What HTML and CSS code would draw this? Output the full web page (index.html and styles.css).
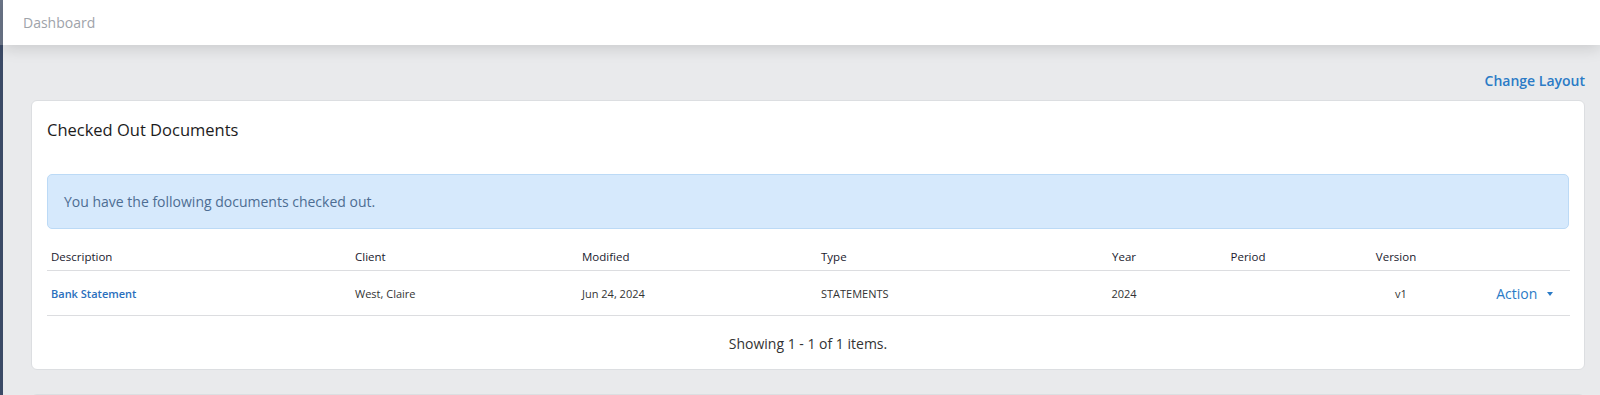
FILE: index.html
```html
<!DOCTYPE html>
<html>
<head>
  <title>Dashboard</title>
  <link rel="stylesheet" href="styles.css">
</head>
<body>
  <div class="sidebar"></div>

  <div class="main">
    <div class="topbar">
      <span class="page-title">Dashboard</span>
    </div>

    <div class="content">
      <div class="toolbar">
        <a href="#" class="change-layout">Change Layout</a>
      </div>

      <div class="card">
        <h2 class="card-title">Checked Out Documents</h2>

        <div class="alert-info">You have the following documents checked out.</div>

        <table class="doc-table">
          <colgroup>
            <col style="width: 304px">
            <col style="width: 227px">
            <col style="width: 239px">
            <col style="width: 253px">
            <col style="width: 108px">
            <col style="width: 140px">
            <col style="width: 156px">
            <col style="width: 96px">
          </colgroup>
          <thead>
            <tr>
              <th>Description</th>
              <th>Client</th>
              <th>Modified</th>
              <th>Type</th>
              <th class="center">Year</th>
              <th class="center">Period</th>
              <th class="center">Version</th>
              <th></th>
            </tr>
          </thead>
          <tbody>
            <tr>
              <td><a href="#" class="doc-link">Bank Statement</a></td>
              <td>West, Claire</td>
              <td>Jun 24, 2024</td>
              <td>STATEMENTS</td>
              <td class="center">2024</td>
              <td class="center"></td>
              <td class="center version-cell">v1</td>
              <td class="action-cell">
                <a href="#" class="action-btn">Action <span class="caret"></span></a>
              </td>
            </tr>
          </tbody>
        </table>

        <div class="pager-info">Showing 1 - 1 of 1 items.</div>
      </div>

      <div class="card card-next"></div>
    </div>
  </div>
</body>
</html>
```

FILE: styles.css
```css
:root {
  --blue: #2b7bc6;
  --page-bg: #e9eaec;
  --border: #dcdee1;
  --text: #222;
}

body {
  margin: 0;
  display: flex;
  min-height: 100vh;
  background: var(--page-bg);
  font-family: "Open Sans", "Noto Sans", sans-serif;
  color: var(--text);
  overflow: hidden;
}

.sidebar {
  width: 3px;
  flex-shrink: 0;
  background: linear-gradient(#6b7588 0 45px, #3b4a66 45px);
}

.main {
  flex: 1;
  min-width: 0;
}

/* Top bar */
.topbar {
  height: 45px;
  background: #fff;
  display: flex;
  align-items: center;
  padding: 0 20px;
  box-shadow: 0 4px 14px rgba(0,0,0,0.13);
  position: relative;
}

.page-title {
  font-size: 14px;
  color: #9ea3aa;
}

.content {
  padding: 0 15px 0 28px;
}

.toolbar {
  display: flex;
  justify-content: flex-end;
  padding: 26px 0 9px;
}

.change-layout {
  font-size: 14px;
  line-height: 20px;
  font-weight: 600;
  color: var(--blue);
  text-decoration: none;
}

/* Card */
.card {
  background: #fff;
  border: 1px solid var(--border);
  border-radius: 6px;
  padding: 15px 15px 15px;
}

.card-title {
  margin: 0 0 30px;
  font-size: 16.5px;
  line-height: 28px;
  font-weight: 400;
  color: #1c1c1c;
}

.alert-info {
  background: #d6e9fc;
  border: 1px solid #bcdaf6;
  border-radius: 5px;
  padding: 16px 16px;
  font-size: 14px;
  line-height: 21px;
  color: #4d6d93;
  margin-bottom: 14px;
}

/* Table */
.doc-table {
  width: 100%;
  border-collapse: collapse;
  table-layout: fixed;
}

.doc-table th {
  text-align: left;
  font-size: 11.5px;
  font-weight: 400;
  line-height: 17px;
  padding: 5px 4px;
  color: #1a1a2e;
  border-bottom: 1px solid #dcdde0;
}

.doc-table td {
  font-size: 11px;
  height: 44px;
  padding: 0 4px;
  color: #333;
  border-bottom: 1px solid #dcdde0;
  vertical-align: middle;
}

.doc-table .center {
  text-align: center;
}

.doc-table .version-cell {
  padding-left: 14px;
}

.doc-link {
  color: #2a6fbd;
  font-weight: 600;
  text-decoration: none;
}

.action-cell {
  text-align: right;
  padding-right: 17px !important;
}

.action-btn {
  color: var(--blue);
  font-size: 14px;
  text-decoration: none;
  white-space: nowrap;
}

.caret {
  display: inline-block;
  width: 0;
  height: 0;
  margin-left: 6px;
  vertical-align: 3px;
  border-left: 3.5px solid transparent;
  border-right: 3.5px solid transparent;
  border-top: 4px solid var(--blue);
}

.pager-info {
  text-align: center;
  font-size: 14px;
  line-height: 20px;
  margin-top: 18px;
  color: #333;
}

.card-next {
  margin-top: 24px;
  height: 60px;
}
```
